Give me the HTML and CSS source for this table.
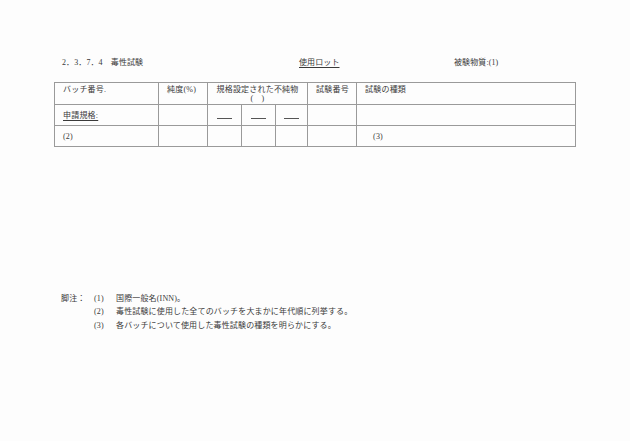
FILE: index.html
```html
<!DOCTYPE html>
<html lang="ja">
<head>
<meta charset="utf-8">
<link rel="stylesheet" href="styles.css">
</head>
<body>
<div class="page">
  <div class="head">
    <span>2．3．7．4　毒性試験</span>
    <span class="ul">使用ロット</span>
    <span>被験物質:(1)</span>
  </div>
  <table class="tbl">
    <colgroup>
      <col class="c1"><col class="c2"><col class="c3"><col class="c3"><col class="c4"><col class="c5"><col>
    </colgroup>
    <tr class="r1">
      <td>バッチ番号.</td>
      <td>純度(%)</td>
      <td colspan="3" class="center">規格設定された不純物<br>(　)</td>
      <td>試験番号</td>
      <td>試験の種類</td>
    </tr>
    <tr class="r2">
      <td><span class="ul">申請規格:</span></td>
      <td></td>
      <td class="center"><span class="dash"></span></td>
      <td class="center"><span class="dash"></span></td>
      <td class="center"><span class="dash"></span></td>
      <td></td>
      <td></td>
    </tr>
    <tr class="r3">
      <td>(2)</td>
      <td></td>
      <td></td>
      <td></td>
      <td></td>
      <td></td>
      <td class="ind">(3)</td>
    </tr>
  </table>
  <div class="notes">
    <span>脚注：</span><span>(1)</span><span>国際一般名(INN)。</span>
    <span></span><span>(2)</span><span>毒性試験に使用した全てのバッチを大まかに年代順に列挙する。</span>
    <span></span><span>(3)</span><span>各バッチについて使用した毒性試験の種類を明らかにする。</span>
  </div>
</div>
</body>
</html>
```

FILE: styles.css
```css
html, body {
  margin: 0;
  padding: 0;
  background: #fdfdfd;
}
body {
  font-family: "Liberation Serif", "Noto Sans CJK JP", serif;
  font-size: 8px;
  color: #3a3a3a;
  width: 630px;
  height: 441px;
  overflow: hidden;
}
.page {
  padding: 57px 0 0 54px;
}
.head {
  display: grid;
  grid-template-columns: 237px 155px auto;
  padding-left: 8px;
  line-height: 12px;
  letter-spacing: 0.1px;
}
.ul {
  text-decoration: underline;
  text-underline-offset: 1.5px;
}
.tbl {
  margin-top: 13px;
  border-collapse: collapse;
  table-layout: fixed;
  width: 522px;
  letter-spacing: 0.2px;
}
.c1 { width: 104px; }
.c2 { width: 49px; }
.c3 { width: 34px; }
.c4 { width: 32px; }
.c5 { width: 49px; }
.tbl td {
  border: 1px solid #9a9a9a;
  padding: 0 0 0 8px;
  line-height: 9px;
  vertical-align: middle;
}
.tbl .center {
  text-align: center;
  padding-left: 0;
}
.r1 td {
  height: 19px;
  vertical-align: top;
  padding-top: 2px;
}
.r2 td, .r3 td {
  height: 20px;
}
.ind {
  padding-left: 16px !important;
}
.dash {
  display: inline-block;
  width: 15px;
  height: 0;
  border-top: 1px solid #555;
  vertical-align: middle;
  margin-top: 6px;
}
.notes {
  margin-top: 145px;
  padding-left: 7px;
  display: grid;
  grid-template-columns: 33px 22px auto;
  line-height: 13.3px;
  letter-spacing: 0.15px;
}
```
